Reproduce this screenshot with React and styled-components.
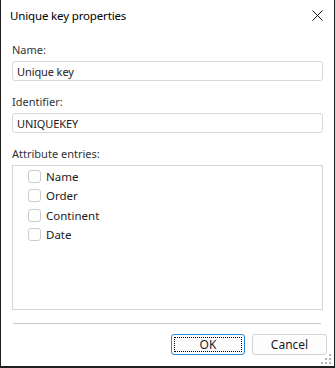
import React from "react";
import styled, { createGlobalStyle } from "styled-components";

const GlobalStyle = createGlobalStyle`
  html, body {
    margin: 0;
    padding: 0;
    background: #ffffff;
  }
  body {
    font-family: "Noto Sans", "Liberation Sans", sans-serif;
  }
`;

const attributes = ["Name", "Order", "Continent", "Date"];

function App() {
  return (
    <>
      <GlobalStyle />
      <DialogStyled>
        <div className="title-bar">
          <span>Unique key properties</span>
          <CloseIcon />
        </div>
        <div className="content">
          <Field>
            <Label>Name:</Label>
            <TextInput defaultValue="Unique key" />
          </Field>
          <Field>
            <Label>Identifier:</Label>
            <TextInput defaultValue="UNIQUEKEY" />
          </Field>
          <Field>
            <Label>Attribute entries:</Label>
            <ListBox>
              {attributes.map((name) => (
                <CheckRow key={name}>
                  <CheckBox />
                  <span>{name}</span>
                </CheckRow>
              ))}
            </ListBox>
          </Field>
          <Separator />
          <div className="buttons">
            <Button $primary>
              <span className="focus">OK</span>
            </Button>
            <Button $wide>Cancel</Button>
          </div>
        </div>
        <Grip />
      </DialogStyled>
    </>
  );
}

function CloseIcon() {
  return (
    <svg width="11" height="11" viewBox="0 0 11 11">
      <path d="M0.5 0.5 L10.5 10.5 M10.5 0.5 L0.5 10.5" stroke="#111" strokeWidth="1" />
    </svg>
  );
}

function Grip() {
  const dots = [
    [8, 0],
    [4, 4],
    [8, 4],
    [0, 8],
    [4, 8],
    [8, 8],
  ];
  return (
    <GripStyled width="11" height="11" viewBox="0 0 11 11">
      {dots.map(([x, y]) => (
        <rect key={`${x}-${y}`} x={x} y={y} width="2" height="2" fill="#b5b5b5" />
      ))}
    </GripStyled>
  );
}

const DialogStyled = styled.div`
  position: relative;
  box-sizing: border-box;
  width: 335px;
  height: 368px;
  border-left: 1px solid #1f1f1f;
  border-right: 1px solid #1f1f1f;
  border-bottom: 2px solid #1f1f1f;
  display: flex;
  flex-direction: column;
  color: #1b1b1b;
  .title-bar {
    height: 31px;
    display: flex;
    align-items: center;
    justify-content: space-between;
    padding: 0 11px 0 9px;
    font-size: 11.5px;
    letter-spacing: -0.15px;
    color: #000;
    svg {
      margin-top: 0;
    }
  }
  .content {
    flex: 1;
    display: flex;
    flex-direction: column;
    padding: 12px 11px 0 11px;
    gap: 14px;
  }
  .buttons {
    display: flex;
    justify-content: flex-end;
    gap: 7px;
    margin-top: -4px;
    margin-right: -4px;
  }
`;

const Field = styled.div`
  display: flex;
  flex-direction: column;
  gap: 4px;
`;

const Label = styled.div`
  font-size: 11px;
  line-height: 14px;
  color: #333;
`;

const TextInput = styled.input`
  box-sizing: border-box;
  height: 20px;
  width: 100%;
  margin: 0;
  padding: 0 4px;
  border: 1px solid #d9d9d9;
  border-radius: 3px;
  font-family: "Noto Sans", "Liberation Sans", sans-serif;
  font-size: 11px;
  letter-spacing: -0.1px;
  color: #1b1b1b;
  outline: none;
  background: #fff;
`;

const ListBox = styled.div`
  box-sizing: border-box;
  height: 145px;
  border: 1px solid #d4d4d4;
  padding: 1px 15px;
  display: flex;
  flex-direction: column;
`;

const CheckRow = styled.div`
  display: flex;
  align-items: center;
  gap: 5px;
  height: 19.3px;
  font-size: 11.5px;
  color: #1b1b1b;
  span {
    line-height: 13px;
  }
`;

const CheckBox = styled.span`
  box-sizing: border-box;
  width: 13px;
  height: 13px;
  border: 1px solid #cccccc;
  border-radius: 3px;
  background: #fff;
  flex-shrink: 0;
`;

const Separator = styled.div`
  height: 1px;
  background: #c6c6c6;
  margin: -1px 2px 0 1px;
`;

const Button = styled.button`
  box-sizing: border-box;
  width: ${(p) => (p.$wide ? "75px" : "74px")};
  height: 21px;
  padding: 2px;
  margin: 0;
  border: 1px solid ${(p) => (p.$primary ? "#2b8ad6" : "#d3d3d3")};
  border-radius: 3px;
  background: #fdfdfd;
  font-family: "Noto Sans", "Liberation Sans", sans-serif;
  font-size: 12px;
  color: #1b1b1b;
  display: flex;
  align-items: center;
  justify-content: center;
  .focus {
    box-sizing: border-box;
    width: 100%;
    height: 100%;
    border: 1px dotted #000;
    display: flex;
    align-items: center;
    justify-content: center;
  }
`;

const GripStyled = styled.svg`
  position: absolute;
  right: 2px;
  bottom: 1px;
`;

export default App;
